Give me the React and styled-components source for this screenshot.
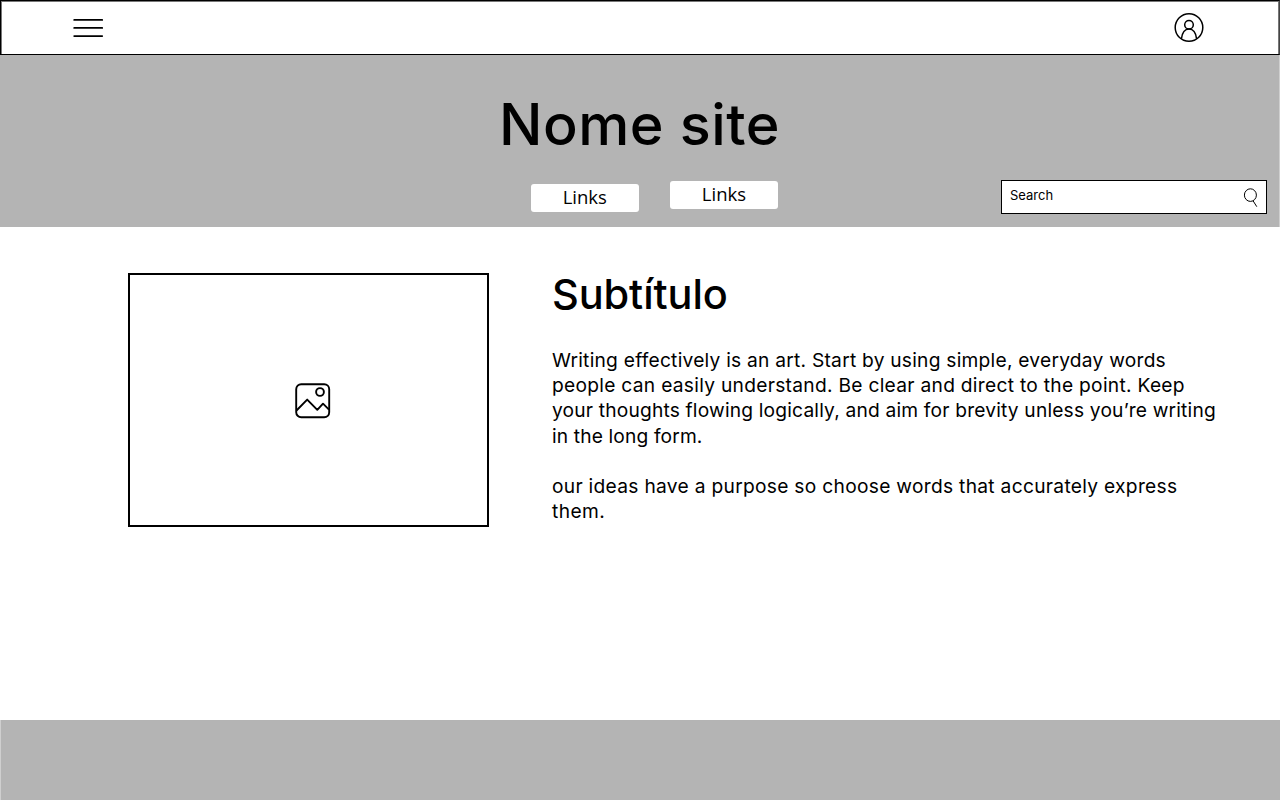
import React from "react";
import styled, { createGlobalStyle } from "styled-components";

const GlobalStyle = createGlobalStyle`
  * { box-sizing: border-box; }
  body { margin: 0; background: #fff; color: #000; }
  h1, h2, p { margin: 0; font-weight: normal; }
`;

const Page = styled.div`
  display: flex;
  flex-direction: column;
  width: 1280px;
  height: 800px;
  overflow: hidden;
  background: #fff;
`;

const TopBar = styled.header`
  display: flex;
  justify-content: space-between;
  align-items: flex-start;
  height: 55px;
  padding: 11px 74px 0 71px;
  border: 1px solid #000;
  box-shadow: inset 1px 1px 0 #777, inset -1px 0 0 #777;
  border-right-color: #444;
`;

const Icon = styled.svg`
  display: block;
  flex: none;
  fill: none;
  stroke: #000;
`;

const Hero = styled.section`
  display: flex;
  flex-direction: column;
  height: 172px;
  background: #b4b4b4;
  border-right: 1px solid #cfcfcf;
`;

const Title = styled.h1`
  margin-top: 35px;
  text-align: center;
  white-space: nowrap;
  font: 500 57.5px/68px Inter, sans-serif;
  letter-spacing: 0.5px;
`;

const HeroNav = styled.nav`
  display: flex;
  align-items: flex-start;
  margin-top: 22px;
  padding-left: 530.6px;
`;

const LinkButton = styled.a`
  width: 108.4px;
  height: 28px;
  margin: ${(p) => p.$drop}px 30.8px 0 0;
  border-radius: 3px;
  background: #fff;
  text-align: center;
  font: 400 18.5px/26px "Open Sans", sans-serif;
`;

const SearchBox = styled.div`
  display: flex;
  justify-content: space-between;
  width: 266px;
  height: 34px;
  margin-left: 192px;
  padding: 0 7px 0 8px;
  border: 1px solid #000;
  background: #fff;
  font: 400 13px/29px Inter, sans-serif;
`;

const Content = styled.main`
  display: flex;
  flex: 1;
  padding: 46px 0 0 128px;
`;

const ImageFrame = styled.div`
  display: flex;
  align-items: center;
  justify-content: center;
  width: 361.4px;
  height: 254px;
  padding: 2px 0 0 8px;
  border: 2px solid #000;
`;

const Article = styled.article`
  margin-left: 62.6px;
`;

const Subtitle = styled.h2`
  font: 500 41.5px/42px Inter, sans-serif;
  letter-spacing: -0.1px;
`;

const Paragraph = styled.p`
  margin-top: ${(p) => p.$gap}px;
  font: 400 19.2px/25.2px Inter, sans-serif;
`;

const Line = styled.span`
  display: block;
  width: max-content;
  white-space: nowrap;
  letter-spacing: ${(p) => p.$track}px;
`;

const Footer = styled.footer`
  height: 80px;
  background: #b4b4b4;
  border-left: 1px solid #cfcfcf;
`;

export default function App() {
  return (
    <Page>
      <GlobalStyle />
      <TopBar>
        <Icon width="32" height="32" viewBox="0 0 32 32" strokeWidth="1.8" strokeLinecap="round">
          <path d="M2.2 7.9H30.2M2.2 15.9H30.2M2.2 24.1H30.2" />
        </Icon>
        <Icon width="32" height="32" viewBox="0 0 32 32" strokeWidth="1.5">
          <circle cx="16" cy="15.5" r="13.8" />
          <circle cx="16" cy="12.7" r="4.3" />
          <path d="M8.4 26.9C9.1 21.2 11.6 17 16 17S22.9 21.2 23.6 26.9" />
        </Icon>
      </TopBar>
      <Hero>
        <Title>Nome site</Title>
        <HeroNav>
          <LinkButton $drop={3.6}>Links</LinkButton>
          <LinkButton $drop={0.8}>Links</LinkButton>
          <SearchBox>
            Search
            <Icon width="16" height="30" viewBox="0 0 16 30" strokeWidth="1">
              <ellipse cx="7.4" cy="14.1" rx="6" ry="6.3" />
              <path d="M10 19.7L13.8 25.7" />
            </Icon>
          </SearchBox>
        </HeroNav>
      </Hero>
      <Content>
        <ImageFrame>
          <Icon width="36" height="36" viewBox="0 0 36 36" strokeWidth="1.9" strokeLinejoin="round">
            <rect x="1.2" y="1.2" width="33" height="33" rx="5" />
            <circle cx="25" cy="9" r="3.9" />
            <path d="M1.5 27.5L12.2 16.6L22.3 26.8L28 20.7L34 26.7" />
          </Icon>
        </ImageFrame>
        <Article>
          <Subtitle>Subtítulo</Subtitle>
          <Paragraph $gap={33}>
            <Line $track={0.235}>Writing effectively is an art. Start by using simple, everyday words</Line>
            <Line $track={0.28}>people can easily understand. Be clear and direct to the point. Keep</Line>
            <Line $track={0.18}>your thoughts flowing logically, and aim for brevity unless you’re writing</Line>
            <Line $track={0.14}>in the long form.</Line>
          </Paragraph>
          <Paragraph $gap={25}>
            <Line $track={0.29}>our ideas have a purpose so choose words that accurately express</Line>
            <Line $track={0.4}>them.</Line>
          </Paragraph>
        </Article>
      </Content>
      <Footer />
    </Page>
  );
}
